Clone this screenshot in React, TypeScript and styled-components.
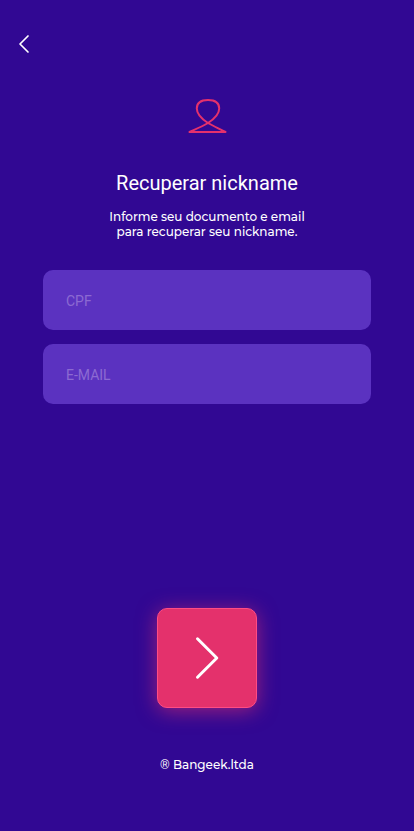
import React, { useState } from "react";
import styled, { createGlobalStyle } from "styled-components";

const GlobalStyle = createGlobalStyle`
  *, *::before, *::after { box-sizing: border-box; }
  body {
    margin: 0;
    background: #310893;
    color: #ffffff;
    font-family: Roboto, "Liberation Sans", sans-serif;
  }
`;

const Screen = styled.div`
  min-height: 100vh;
  display: flex;
  flex-direction: column;
  background: #310893;
`;

const TopBar = styled.header`
  display: flex;
  padding: 32px 12px 0;
`;

const BackLink = styled.a`
  display: flex;
  align-items: center;
  justify-content: center;
  width: 24px;
  height: 24px;
  color: #ffffff;
`;

const Main = styled.main`
  flex: 1;
  display: flex;
  flex-direction: column;
  align-items: center;
  padding: 42px 43px 0;
`;

const Title = styled.h1`
  margin: 37px 0 0;
  font-size: 20px;
  line-height: 24px;
  font-weight: 400;
`;

const Hint = styled.p`
  width: 220px;
  margin: 14px 0 0;
  font-family: Montserrat, Inter, sans-serif;
  font-size: 12px;
  line-height: 15px;
  font-weight: 500;
  text-align: center;
`;

const Form = styled.form`
  flex: 1;
  align-self: stretch;
  display: flex;
  flex-direction: column;
  align-items: center;
  gap: 14px;
  margin-top: 31px;
`;

const Field = styled.input`
  width: 100%;
  height: 60px;
  padding: 2px 23px 0;
  border: 0;
  border-radius: 10px;
  background: #5b32c0;
  color: #ffffff;
  font-family: inherit;
  font-size: 14px;

  &::placeholder {
    color: #8c6ad2;
    opacity: 1;
  }
  &:focus-visible {
    outline: 2px solid #8c6ad2;
  }
`;

const SubmitButton = styled.button`
  display: flex;
  align-items: center;
  justify-content: center;
  width: 100px;
  height: 100px;
  margin-top: auto;
  padding: 0;
  border: 1px solid #ff4c84;
  border-radius: 10px;
  background: #e4316c;
  color: #ffffff;
  box-shadow: 0 3px 20px rgba(228, 49, 108, 0.6);
  cursor: pointer;
`;

const Footer = styled.footer`
  padding: 48px 0 58px;
  font-family: Montserrat, Inter, sans-serif;
  font-size: 12px;
  line-height: 17px;
  font-weight: 500;
  text-align: center;
`;

const BackIcon = () => (
  <svg width="12" height="20" viewBox="0 0 12 20" fill="none" aria-hidden="true">
    <path d="M10 2 2 10l8 8" stroke="currentColor" strokeWidth="1.7" strokeLinecap="round" strokeLinejoin="round" />
  </svg>
);

const ProfileIcon = () => (
  <svg width="40" height="36" viewBox="0 0 40 36" fill="none" aria-hidden="true">
    <path
      d="M2.500 34h36C33 31 27 28.500 21 25 14 20.500 9.800 15.500 9.800 10.500 9.800 5 14 2 21 2S32.200 5 32.200 10.500C32.200 15.500 28 20.500 21 25 15 28.500 9 31 2.500 34Z"
      stroke="#e4316c"
      strokeWidth="2"
      strokeLinejoin="round"
    />
  </svg>
);

const NextIcon = () => (
  <svg width="26" height="44" viewBox="0 0 26 44" fill="none" aria-hidden="true">
    <path d="M3.500 2.800 22.800 22 3.500 41.200" stroke="currentColor" strokeWidth="3" strokeLinecap="round" strokeLinejoin="round" />
  </svg>
);

export default function App() {
  const [cpf, setCpf] = useState("");
  const [email, setEmail] = useState("");

  return (
    <>
      <GlobalStyle />
      <Screen>
        <TopBar>
          <BackLink href="#" aria-label="Voltar">
            <BackIcon />
          </BackLink>
        </TopBar>
        <Main>
          <ProfileIcon />
          <Title>Recuperar nickname</Title>
          <Hint>Informe seu documento e email para recuperar seu nickname.</Hint>
          <Form onSubmit={(event) => event.preventDefault()}>
            <Field aria-label="CPF" placeholder="CPF" inputMode="numeric" value={cpf} onChange={(event) => setCpf(event.target.value)} />
            <Field aria-label="E-mail" placeholder="E-MAIL" type="email" value={email} onChange={(event) => setEmail(event.target.value)} />
            <SubmitButton type="submit" aria-label="Continuar">
              <NextIcon />
            </SubmitButton>
          </Form>
        </Main>
        <Footer>® Bangeek.ltda</Footer>
      </Screen>
    </>
  );
}
